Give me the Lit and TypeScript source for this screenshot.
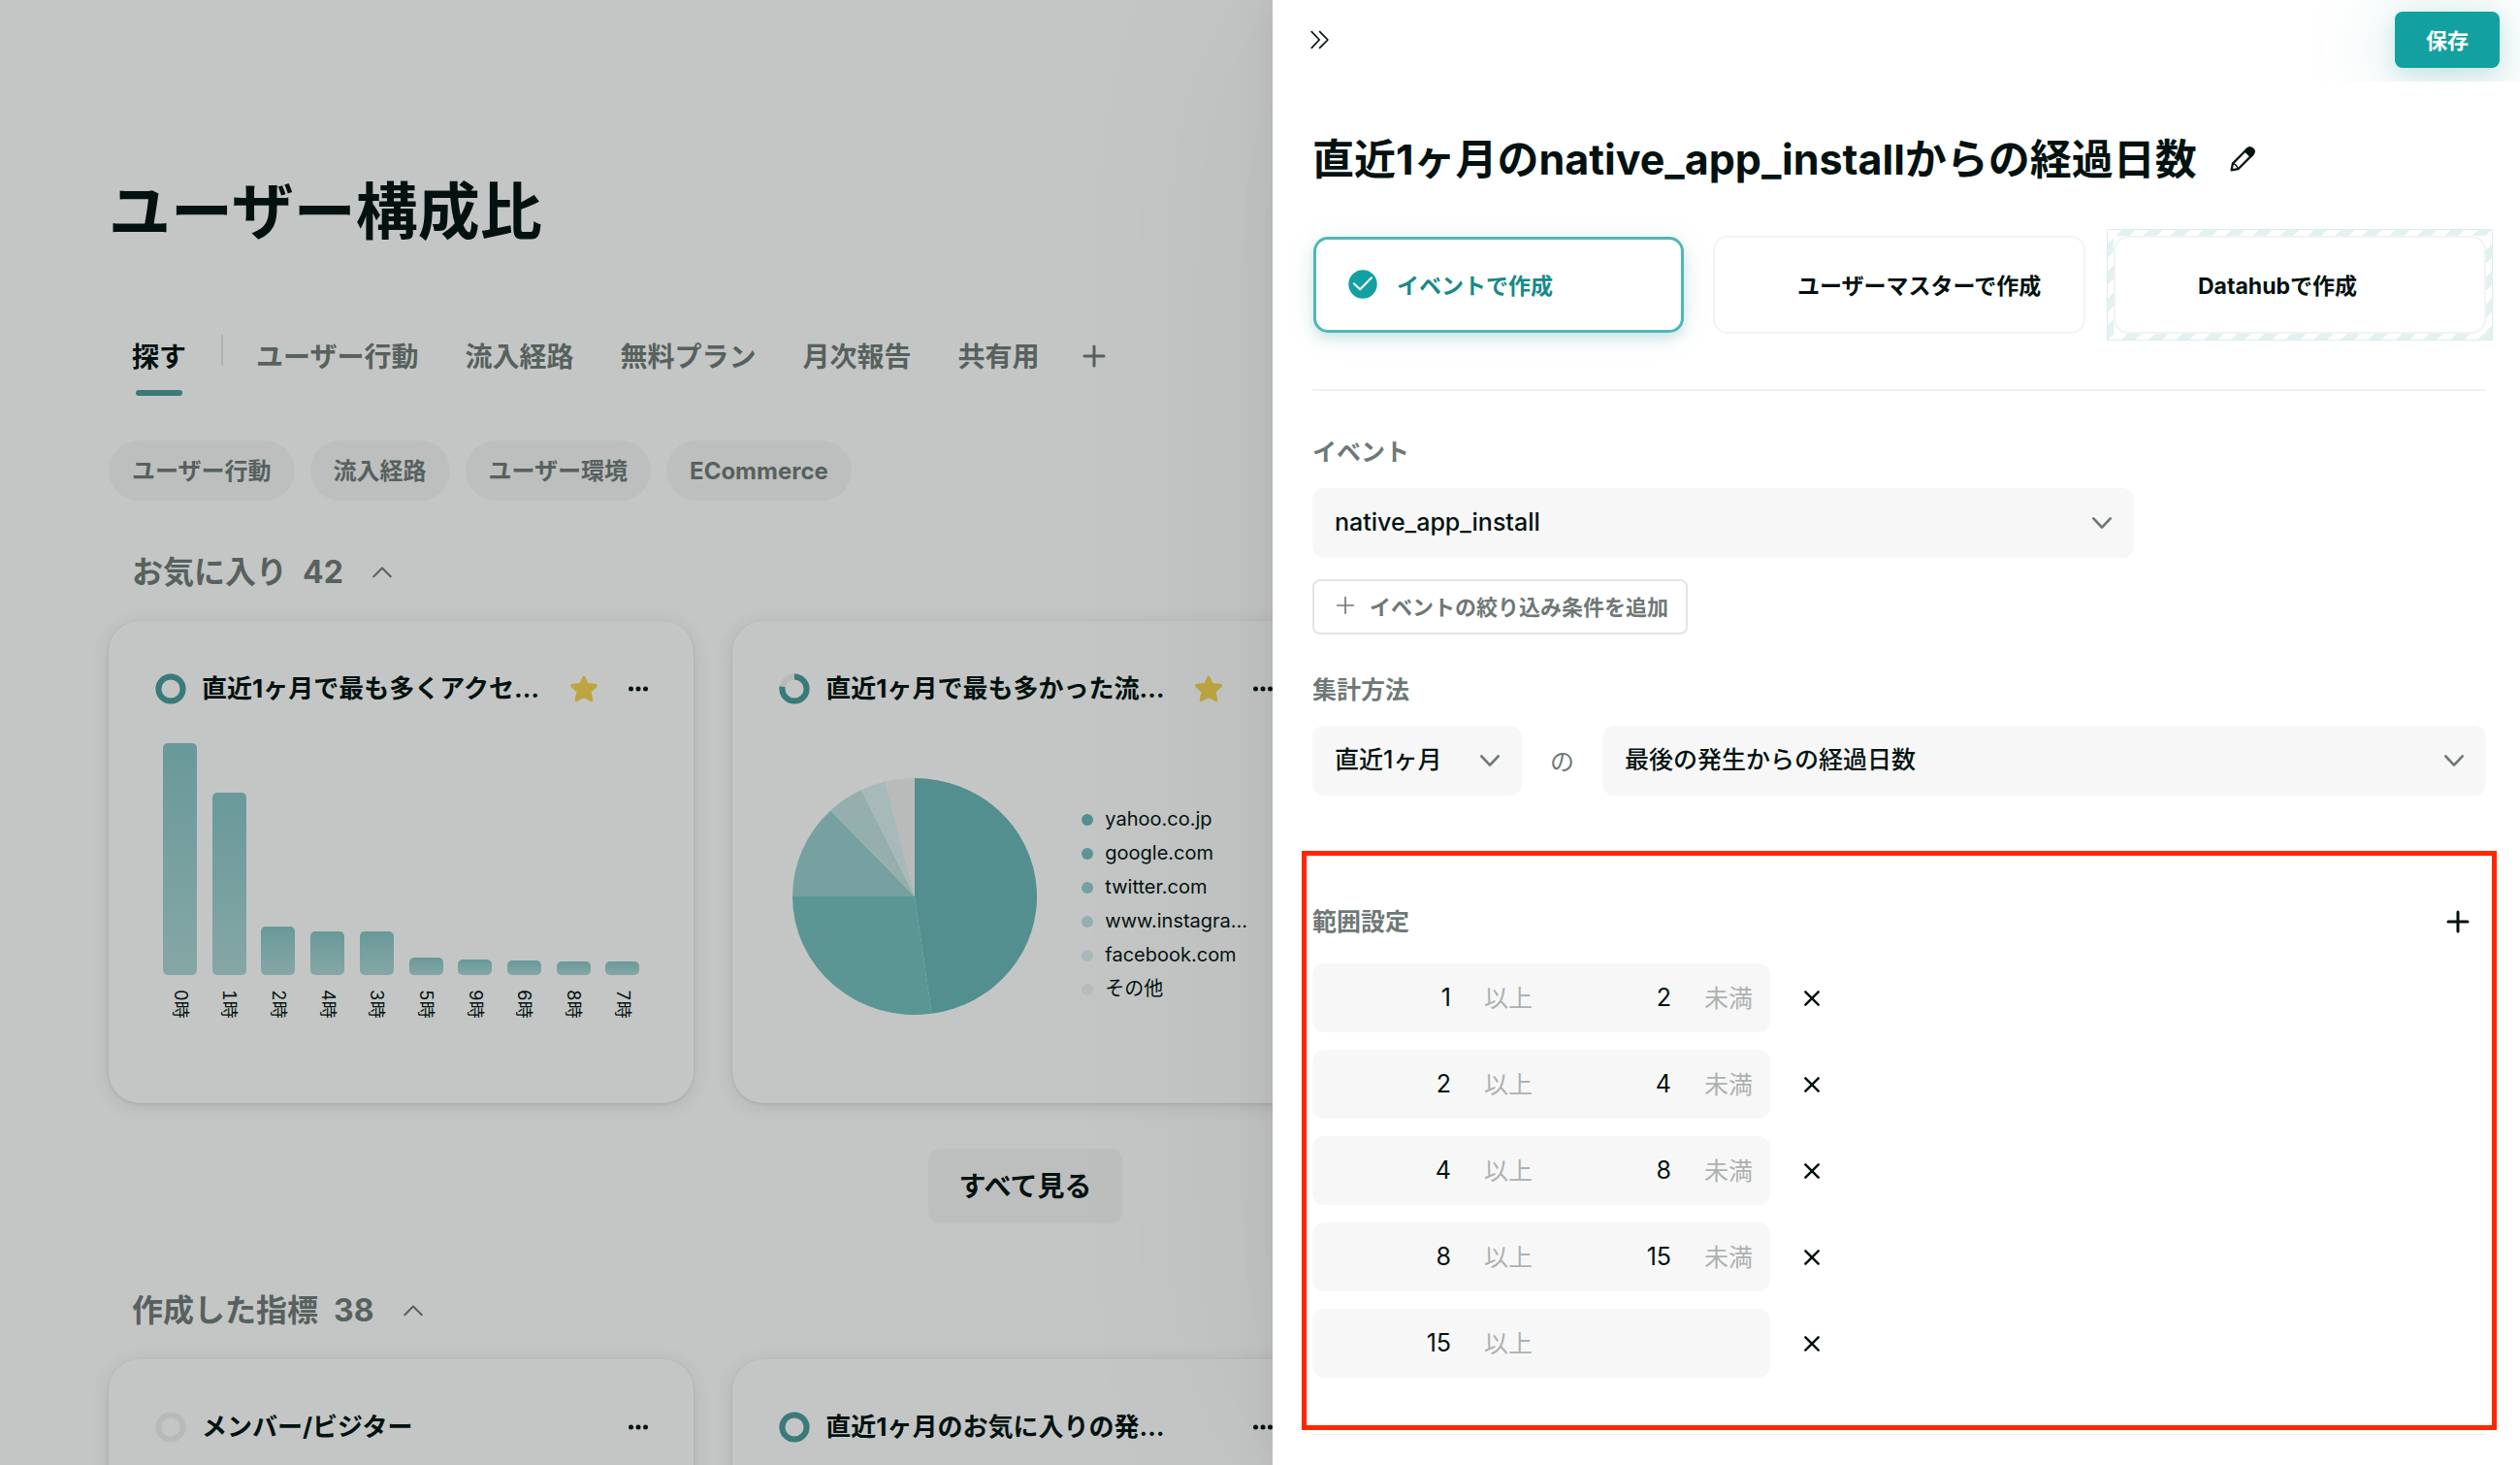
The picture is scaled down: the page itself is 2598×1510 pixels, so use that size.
import { LitElement, html, css, svg, nothing } from "lit";
import { customElement, property, state } from "lit/decorators.js";

type Range = { from: string; to?: string };

const ICONS = {
  plus: svg`<path d="M12 2V22M2 12H22" />`,
  close: svg`<path d="M4 4L20 20M20 4L4 20" />`,
  down: svg`<path d="M2.5 7L12 17L21.5 7" />`,
  up: svg`<path d="M1.5 17L12 6.5L22.5 17" />`,
  collapse: svg`<path d="M1.5 2L11 12L1.5 22M11.5 2L21.5 12L11.5 22" />`,
};

@customElement("line-icon")
export class LineIcon extends LitElement {
  @property() name: keyof typeof ICONS = "plus";
  @property({ type: Number }) weight = 2;

  static styles = css`
    :host {
      display: block;
      width: 20px;
      height: 20px;
      flex: none;
    }
    svg {
      display: block;
      width: 100%;
      height: 100%;
      fill: none;
      stroke: currentColor;
      stroke-linecap: round;
      stroke-linejoin: round;
    }
  `;

  render() {
    return html`<svg viewBox="0 0 24 24" stroke-width=${this.weight} aria-hidden="true">
      ${ICONS[this.name]}
    </svg>`;
  }
}

@customElement("metric-card")
export class MetricCard extends LitElement {
  @property() heading = "";
  @property({ type: Number }) progress = 100;
  @property({ type: Boolean }) starred = false;

  static styles = css`
    :host {
      display: block;
      height: 497px;
      border-radius: 32px;
      background: #c4c6c5;
      box-shadow: 0 1px 3px rgba(0, 10, 8, 0.1), 0 3px 20px rgba(0, 10, 8, 0.1);
    }
    .head {
      display: flex;
      align-items: center;
      height: 40px;
      padding: 50px 47px 0 48px;
    }
    .ring {
      flex: none;
      width: 32px;
      height: 32px;
      margin-right: 16px;
      fill: none;
      stroke-width: 6;
    }
    .track {
      stroke: #b8bab9;
    }
    .value {
      stroke: #387b7a;
    }
    h3 {
      flex: 1;
      min-width: 0;
      margin: 0;
      font-size: 26px;
      font-weight: 700;
      line-height: 40px;
      white-space: nowrap;
    }
    button {
      flex: none;
      display: block;
      padding: 0;
      border: 0;
      background: none;
      color: inherit;
      cursor: pointer;
    }
    button svg {
      display: block;
    }
    .star {
      width: 30px;
      height: 30px;
      margin-right: 31px;
    }
    .star svg {
      fill: #bda540;
      stroke: #bda540;
      stroke-width: 3;
      stroke-linejoin: round;
    }
    .more {
      width: 20px;
      height: 20px;
    }
  `;

  render() {
    return html`
      <div class="head">
        <svg class="ring" viewBox="0 0 32 32" aria-hidden="true">
          <circle class="track" cx="16" cy="16" r="12.6" />
          ${this.progress > 0
            ? svg`<circle class="value" cx="16" cy="16" r="12.6" pathLength="100"
                stroke-dasharray="${this.progress} ${100 - this.progress}" transform="rotate(-90 16 16)" />`
            : nothing}
        </svg>
        <h3>${this.heading}</h3>
        ${this.starred
          ? html`<button class="star" aria-label="お気に入り">
              <svg viewBox="0 0 30 30" width="30" height="30">
                <path d="M15 3L18.4 10.6L27.5 11.6L21 17.8L22.8 26.6L15 22.4L7.2 26.6L9 17.8L2.5 11.6L11.6 10.6Z" />
              </svg>
            </button>`
          : nothing}
        <button class="more" aria-label="メニュー">
          <svg viewBox="0 0 20 20" width="20" height="20" fill="currentColor">
            <circle cx="2.5" cy="10" r="2.5" />
            <circle cx="10" cy="10" r="2.5" />
            <circle cx="17.5" cy="10" r="2.5" />
          </svg>
        </button>
      </div>
      <slot></slot>
    `;
  }
}

@customElement("hour-bars")
export class HourBars extends LitElement {
  private data: [string, number][] = [
    ["0時", 239],
    ["1時", 188],
    ["2時", 50],
    ["4時", 45],
    ["3時", 45],
    ["5時", 18],
    ["9時", 16],
    ["6時", 15],
    ["8時", 14],
    ["7時", 14],
  ];

  static styles = css`
    :host {
      display: flex;
      justify-content: space-between;
      align-items: flex-end;
      margin: 36px 56px 0;
    }
    .col {
      display: flex;
      flex-direction: column;
      align-items: center;
      width: 35px;
    }
    .bar {
      width: 100%;
      border-radius: 5px;
      background: linear-gradient(#699999, #85a7a6);
    }
    .label {
      height: 32px;
      margin-top: 15px;
      font-size: 18px;
      font-variant-numeric: tabular-nums;
      line-height: 20px;
      writing-mode: vertical-rl;
      text-orientation: sideways;
    }
  `;

  render() {
    return this.data.map(
      ([label, size]) => html`<div class="col">
        <div class="bar" style="height:${size}px"></div>
        <div class="label">${label}</div>
      </div>`,
    );
  }
}

@customElement("source-pie")
export class SourcePie extends LitElement {
  private data = [
    { label: "yahoo.co.jp", end: 172, color: "#528f8e" },
    { label: "google.com", end: 270, color: "#5b9695" },
    { label: "twitter.com", end: 316.5, color: "#76a1a0" },
    { label: "www.instagra…", end: 334, color: "#94afad" },
    { label: "facebook.com", end: 346, color: "#a7b9b9" },
    { label: "その他", end: 360, color: "#b9bbba" },
  ];

  static styles = css`
    :host {
      display: flex;
      align-items: center;
      padding: 72px 0 0 62px;
    }
    .pie {
      flex: none;
      width: 252px;
      height: 244px;
    }
    ul {
      margin: 16px 0 0 46px;
      padding: 0;
      list-style: none;
    }
    li {
      display: flex;
      align-items: center;
      gap: 12px;
      font-size: 20px;
      line-height: 35px;
      white-space: nowrap;
    }
    .dot {
      width: 12px;
      height: 12px;
      border-radius: 50%;
    }
  `;

  private slice(start: number, end: number) {
    const at = (deg: number) => {
      const r = (deg * Math.PI) / 180;
      return `${(Math.sin(r) * 100).toFixed(2)} ${(-Math.cos(r) * 100).toFixed(2)}`;
    };
    return `M0 0L${at(start)}A100 100 0 ${end - start > 180 ? 1 : 0} 1 ${at(end)}Z`;
  }

  render() {
    return html`
      <svg class="pie" viewBox="-100 -100 200 200" preserveAspectRatio="none" role="img" aria-label="流入元">
        ${this.data.map(
          (d, i) => svg`<path d=${this.slice(i ? this.data[i - 1].end : 0, d.end)} fill=${d.color} />`,
        )}
      </svg>
      <ul>
        ${this.data.map(
          (d) => html`<li><span class="dot" style="background:${d.color}"></span>${d.label}</li>`,
        )}
      </ul>
    `;
  }
}

@customElement("dashboard-page")
export class DashboardPage extends LitElement {
  static styles = css`
    :host {
      display: block;
      padding: 176px 596px 0 112px;
    }
    h1 {
      margin: 0;
      font-size: 64px;
      font-weight: 700;
      line-height: 84px;
    }
    nav {
      display: flex;
      align-items: flex-start;
      margin: 88px 0 0 24px;
      color: #57615e;
    }
    a {
      color: inherit;
      text-decoration: none;
    }
    .tab {
      display: flex;
      flex-direction: column;
      align-items: center;
      gap: 14px;
      height: 60px;
      margin-right: 48px;
      font-size: 28px;
      font-weight: 700;
      line-height: 40px;
      white-space: nowrap;
    }
    .tab.current {
      margin-right: 36px;
      color: #031210;
    }
    .tab.current::after {
      content: "";
      width: 48px;
      height: 6px;
      border-radius: 3px;
      background: #387b7a;
    }
    .rule {
      width: 2px;
      height: 32px;
      margin: -3px 34px 0 0;
      background: #aeb1b0;
    }
    button {
      font: inherit;
      color: inherit;
      border: 0;
      cursor: pointer;
    }
    .icon-button {
      display: block;
      padding: 0;
      background: none;
    }
    .add {
      margin-left: -4px;
      padding-top: 7px;
    }
    .add line-icon {
      width: 24px;
      height: 24px;
    }
    .pills {
      display: flex;
      gap: 16px;
      margin-top: 46px;
    }
    .pill {
      padding: 2px 24px 0;
      border-radius: 31px;
      background: #bdbfbe;
      color: #57615e;
      font-size: 24px;
      font-weight: 700;
      line-height: 60px;
    }
    .heading {
      display: flex;
      align-items: center;
      gap: 16px;
      margin: 50px 0 26px 24px;
      color: #57615e;
    }
    .heading.later {
      margin-top: 66px;
    }
    h2 {
      display: flex;
      gap: 16px;
      margin: 0 14px 0 0;
      font-size: 32px;
      font-weight: 700;
      line-height: 48px;
    }
    .cards {
      display: grid;
      grid-template-columns: repeat(3, 1fr);
      gap: 40px;
    }
    .all {
      display: block;
      margin: 47px auto 0;
      padding: 2px 32px 0;
      border-radius: 12px;
      background: #bdbfbe;
      font-size: 28px;
      font-weight: 700;
      line-height: 75px;
    }
  `;

  render() {
    return html`
      <h1>ユーザー構成比</h1>
      <nav>
        <a class="tab current" href="#explore">探す</a>
        <span class="rule"></span>
        ${["ユーザー行動", "流入経路", "無料プラン", "月次報告", "共有用"].map(
          (t) => html`<a class="tab" href="#tab">${t}</a>`,
        )}
        <button class="icon-button add" aria-label="タブを追加"><line-icon name="plus" weight="3"></line-icon></button>
      </nav>
      <div class="pills">
        ${["ユーザー行動", "流入経路", "ユーザー環境", "ECommerce"].map(
          (t) => html`<button class="pill">${t}</button>`,
        )}
      </div>
      <div class="heading">
        <h2><span>お気に入り</span><span>42</span></h2>
        <button class="icon-button" aria-label="折りたたむ"><line-icon name="up" weight="2.5"></line-icon></button>
      </div>
      <div class="cards">
        <metric-card heading="直近1ヶ月で最も多くアクセ…" progress="100" starred><hour-bars></hour-bars></metric-card>
        <metric-card heading="直近1ヶ月で最も多かった流…" progress="78" starred><source-pie></source-pie></metric-card>
      </div>
      <button class="all">すべて見る</button>
      <div class="heading later">
        <h2><span>作成した指標</span><span>38</span></h2>
        <button class="icon-button" aria-label="折りたたむ"><line-icon name="up" weight="2.5"></line-icon></button>
      </div>
      <div class="cards">
        <metric-card heading="メンバー/ビジター" progress="0"></metric-card>
        <metric-card heading="直近1ヶ月のお気に入りの発…" progress="100"></metric-card>
      </div>
    `;
  }
}

@customElement("metric-drawer")
export class MetricDrawer extends LitElement {
  @state() private source = "event";
  @state() private ranges: Range[] = [
    { from: "1", to: "2" },
    { from: "2", to: "4" },
    { from: "4", to: "8" },
    { from: "8", to: "15" },
    { from: "15" },
  ];

  static styles = css`
    :host {
      display: block;
      background: #fff;
      box-shadow: 0 0 40px rgba(0, 10, 8, 0.08), 0 0 240px rgba(0, 10, 8, 0.06);
    }
    button,
    select,
    input {
      margin: 0;
      font: inherit;
      color: inherit;
      border: 0;
    }
    button {
      cursor: pointer;
    }
    .icon-button {
      display: flex;
      align-items: center;
      justify-content: center;
      padding: 0;
      background: none;
    }
    header {
      display: flex;
      align-items: center;
      justify-content: space-between;
      height: 82px;
      padding: 0 21px 2px 39px;
      overflow: hidden;
    }
    .save {
      width: 108px;
      height: 58px;
      padding: 0 0 2px;
      border-radius: 8px;
      background: #12a1a0;
      color: #fff;
      font-size: 22px;
      font-weight: 700;
      box-shadow: 0 6px 20px rgba(0, 120, 110, 0.14), 0 10px 90px rgba(0, 150, 140, 0.26);
    }
    .body {
      padding: 48px 35px 0 41px;
    }
    .title {
      display: flex;
      align-items: center;
      gap: 33px;
    }
    h2 {
      margin: 0;
      font-size: 43px;
      font-weight: 700;
      line-height: 64px;
      white-space: nowrap;
    }
    .sources {
      display: grid;
      grid-template-columns: repeat(3, 1fr);
      gap: 29px;
      margin: 0;
      padding: 47px 0 57px;
      border: 0;
      border-bottom: 2px solid #f0f1f1;
    }
    .source {
      position: relative;
      display: flex;
      align-items: center;
      gap: 20px;
      height: 101px;
      box-sizing: border-box;
      padding: 0 0 2px 35px;
      border: 2px solid #f2f3f3;
      border-radius: 15px;
      background: #fff;
      font-size: 23px;
      font-weight: 700;
      white-space: nowrap;
      cursor: pointer;
    }
    .source.checked {
      height: 99px;
      margin: 1px;
      padding-left: 33px;
      border: 3px solid #4db8b8;
      color: #158a89;
      box-shadow: 0 6px 12px rgba(0, 130, 120, 0.14), 0 4px 30px rgba(0, 130, 120, 0.1);
    }
    .source input {
      position: absolute;
      inset: 0;
      opacity: 0;
      cursor: pointer;
    }
    .mark {
      width: 30px;
      height: 30px;
      flex: none;
    }
    .striped {
      margin: -7px;
      padding: 6px;
      border: 1px solid #d9eeec;
      background:
        linear-gradient(#fff, #fff) content-box,
        repeating-linear-gradient(135deg, #fff 0 10px, #e3f1f1 10px 20px);
    }
    .label {
      display: block;
      margin: 0;
      color: #6f7876;
      font-size: 25px;
      font-weight: 700;
      line-height: 40px;
    }
    .event {
      margin-top: 43px;
    }
    .select {
      display: grid;
      align-items: center;
      border-radius: 12px;
      background: #f7f7f7;
    }
    .select > * {
      grid-area: 1 / 1;
    }
    .select select {
      width: 100%;
      height: 72px;
      padding: 0 60px 2px 23px;
      appearance: none;
      border-radius: 12px;
      background: none;
      font-size: 25px;
      font-weight: 500;
      cursor: pointer;
    }
    .select line-icon {
      justify-self: end;
      margin-right: 22px;
      color: #6f7876;
      width: 22px;
      height: 22px;
      pointer-events: none;
    }
    .wide {
      width: 70%;
      margin-top: 17px;
    }
    .filter {
      display: flex;
      align-items: center;
      gap: 15px;
      height: 57px;
      margin: 22px 0 37px;
      padding: 0 18px 3px 22px;
      border: 2px solid #e3e4e4;
      border-radius: 8px;
      background: #fff;
      color: #6f7876;
      font-size: 22px;
      font-weight: 700;
    }
    .method {
      display: grid;
      grid-template-columns: 216px 83px 1fr;
      align-items: center;
      margin-top: 17px;
      font-size: 25px;
    }
    .particle {
      padding-bottom: 3px;
      color: #6f7876;
      text-align: center;
    }
    .ranges {
      margin: 57px -11px 0;
      padding: 48px 6px 49px;
      border: 5px solid #ff2600;
    }
    .ranges-head {
      display: flex;
      align-items: center;
      justify-content: space-between;
      height: 40px;
      margin-bottom: 23px;
    }
    .add-range {
      width: 58px;
      height: 40px;
    }
    .add-range line-icon {
      width: 24px;
      height: 24px;
    }
    ol {
      display: grid;
      gap: 18px;
      margin: 0;
      padding: 0;
      list-style: none;
    }
    li {
      display: flex;
      align-items: center;
      gap: 22px;
    }
    .range {
      display: flex;
      width: 472px;
      height: 71px;
      border-radius: 12px;
      background: #f7f7f7;
      font-size: 25px;
    }
    .bound {
      display: flex;
      align-items: center;
      gap: 34px;
    }
    .bound input {
      width: 143px;
      height: 100%;
      box-sizing: border-box;
      padding: 0 0 2px;
      background: none;
      text-align: right;
    }
    .unit {
      padding-bottom: 4px;
      color: #adb1b0;
    }
    .remove {
      width: 42px;
      height: 42px;
    }
    .end {
      height: 1px;
      margin: 4px 0 0;
      border: 0;
      background: #eceded;
    }
  `;

  private renderSource(id: string, label: string) {
    const checked = this.source === id;
    return html`<label class="source ${checked ? "checked" : ""}">
      <input
        type="radio"
        name="source"
        .checked=${checked}
        @change=${() => (this.source = id)}
      />
      <svg class="mark" viewBox="0 0 30 30" aria-hidden="true">
        ${checked
          ? svg`<circle cx="15" cy="15" r="14.7" fill="#12a1a0" />
              <path d="M5.8 14.2L12.2 20.2L24 8.2" fill="none" stroke="#fff" stroke-width="2"
                stroke-linecap="round" stroke-linejoin="round" />`
          : nothing}
      </svg>
      ${label}
    </label>`;
  }

  private renderBound(value: string, unit: string) {
    return html`<label class="bound">
      <input type="text" inputmode="numeric" .value=${value} />
      <span class="unit">${unit}</span>
    </label>`;
  }

  render() {
    return html`
      <header>
        <button class="icon-button" aria-label="閉じる"><line-icon name="collapse" weight="2"></line-icon></button>
        <button class="save">保存</button>
      </header>
      <div class="body">
        <div class="title">
          <h2>直近1ヶ月のnative_app_installからの経過日数</h2>
          <button class="icon-button" aria-label="名前を編集">
            <svg viewBox="0 0 28 28" width="28" height="28" fill="none" stroke="currentColor" stroke-width="2.2"
              stroke-linejoin="round" aria-hidden="true">
              <path d="M2.6 25.4L3.8 18.6L18.6 3.8Q20.6 1.8 23 2.8Q26.4 4.4 25.4 7.4Q25.2 8.4 24.2 9.4L9.4 24.2Z" />
              <path d="M16.8 5.6L18.6 3.8Q20.6 1.8 23 2.8Q26.4 4.4 25.4 7.4Q25.2 8.4 24.2 9.4L22.4 11.2Z" fill="currentColor" />
              <path d="M3.8 18.6Q8.2 19.6 9.4 24.2" stroke-width="1.4" />
            </svg>
          </button>
        </div>
        <fieldset class="sources" aria-label="作成方法">
          ${this.renderSource("event", "イベントで作成")}
          ${this.renderSource("master", "ユーザーマスターで作成")}
          <div class="striped">${this.renderSource("datahub", "Datahubで作成")}</div>
        </fieldset>

        <label class="label event" for="event">イベント</label>
        <div class="select wide">
          <select id="event"><option>native_app_install</option></select>
          <line-icon name="down" weight="3"></line-icon>
        </div>
        <button class="filter"><line-icon name="plus"></line-icon>イベントの絞り込み条件を追加</button>

        <label class="label" for="period">集計方法</label>
        <div class="method">
          <div class="select">
            <select id="period"><option>直近1ヶ月</option></select>
            <line-icon name="down" weight="3"></line-icon>
          </div>
          <span class="particle">の</span>
          <div class="select">
            <select aria-label="集計する値"><option>最後の発生からの経過日数</option></select>
            <line-icon name="down" weight="3"></line-icon>
          </div>
        </div>

        <section class="ranges">
          <div class="ranges-head">
            <h3 class="label">範囲設定</h3>
            <button
              class="icon-button add-range"
              aria-label="範囲を追加"
              @click=${() => (this.ranges = [...this.ranges, { from: "" }])}
            >
              <line-icon name="plus" weight="3"></line-icon>
            </button>
          </div>
          <ol>
            ${this.ranges.map(
              (r, i) => html`<li>
                <div class="range">
                  ${this.renderBound(r.from, "以上")}
                  ${r.to === undefined ? nothing : this.renderBound(r.to, "未満")}
                </div>
                <button
                  class="icon-button remove"
                  aria-label="範囲を削除"
                  @click=${() => (this.ranges = this.ranges.filter((_, n) => n !== i))}
                >
                  <line-icon name="close" weight="3"></line-icon>
                </button>
              </li>`,
            )}
          </ol>
        </section>
        <hr class="end" />
      </div>
    `;
  }
}

@customElement("app-root")
export class AppRoot extends LitElement {
  static styles = css`
    :host {
      display: block;
      position: relative;
      height: 100vh;
      overflow: hidden;
      background: #c4c6c5;
      color: #031210;
      font-family: Inter, "Noto Sans CJK JP", sans-serif;
    }
    .drawer {
      position: absolute;
      top: 0;
      right: 0;
      bottom: 0;
      width: 49.5%;
    }
  `;

  render() {
    return html`
      <dashboard-page></dashboard-page>
      <metric-drawer class="drawer"></metric-drawer>
    `;
  }
}
